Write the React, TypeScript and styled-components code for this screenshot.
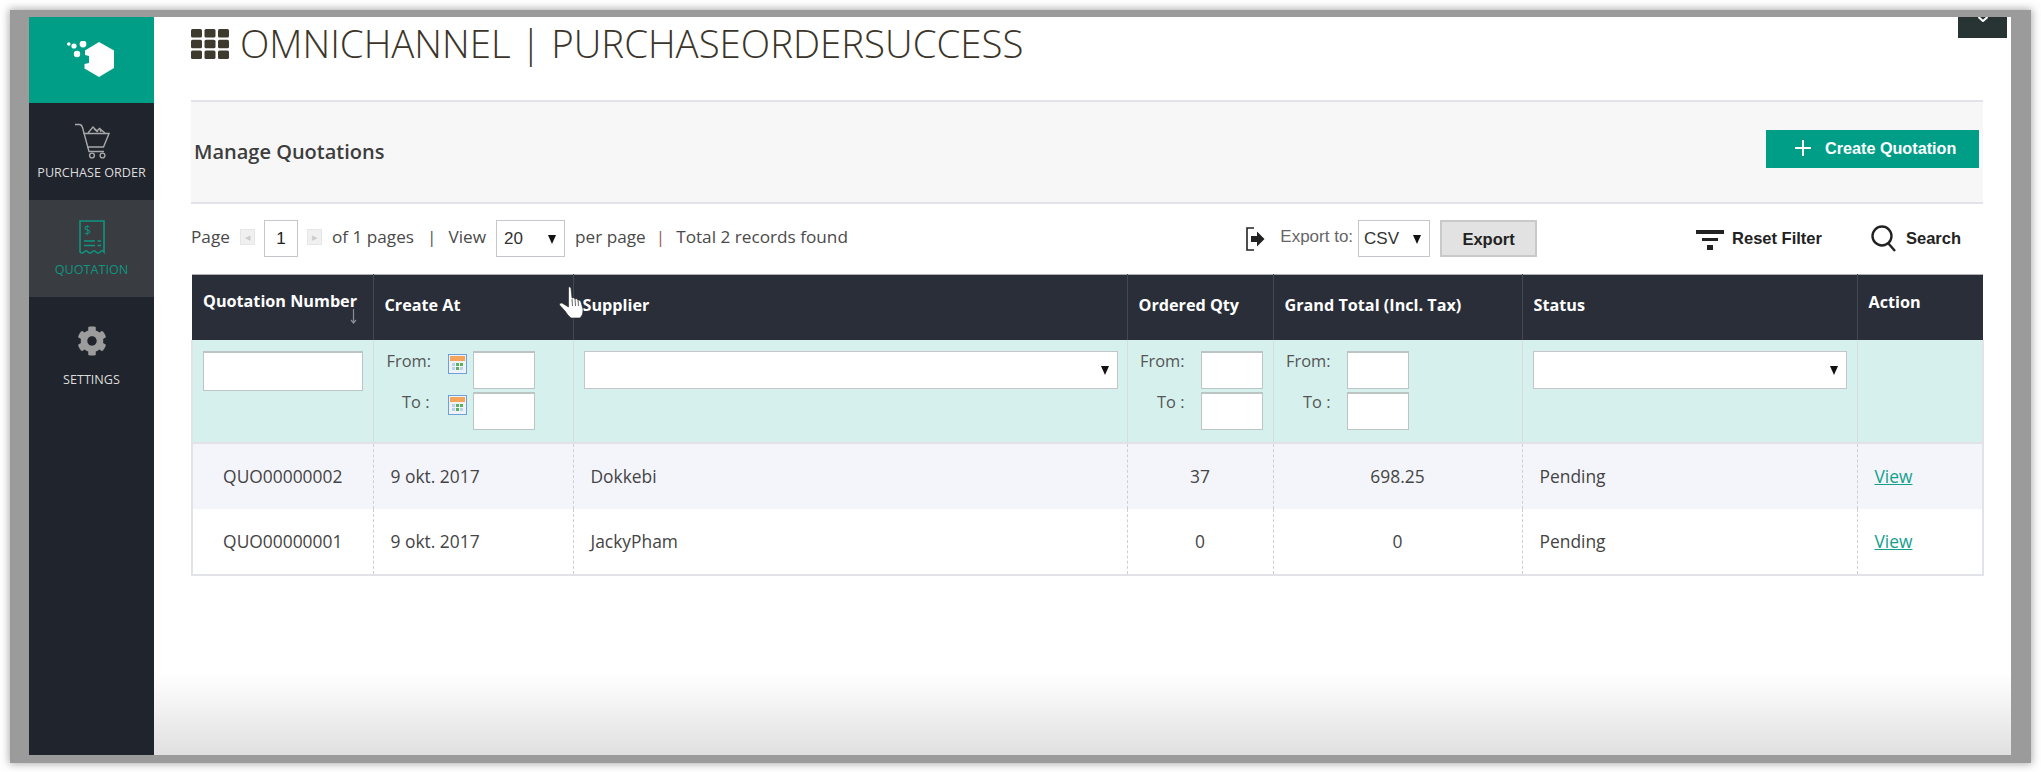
import React from 'react';
import styled, { createGlobalStyle } from 'styled-components';
import { FaCog } from 'react-icons/fa';

const GlobalStyle = createGlobalStyle`
  html, body { margin: 0; padding: 0; background: #fff; }
  body { font-family: "Open Sans", "Liberation Sans", sans-serif; color: #444; }
  * { box-sizing: border-box; }
`;

const TEAL = '#009e87';

const Page = styled.div`
  width: 2041px;
  height: 772px;
  padding: 10px 10px 9px 10px;
  overflow: hidden;
`;
const Frame = styled.div`
  position: relative;
  display: flex;
  height: 753px;
  border-style: solid;
  border-color: #9b9b9b;
  border-width: 7px 20px 8px 19px;
  box-shadow: 0 0 8px 1px rgba(90, 90, 90, 0.5);
  overflow: hidden;
`;
const Sidebar = styled.nav`
  flex: 0 0 125px;
  background: #20242c;
  display: flex;
  flex-direction: column;
`;
const Logo = styled.div`
  height: 86px;
  background: ${TEAL};
  display: flex;
  align-items: center;
  justify-content: center;
`;
const NavItem = styled.div<{ $active?: boolean }>`
  height: 97px;
  display: flex;
  flex-direction: column;
  align-items: center;
  padding-top: 20px;
  background: ${(p) => (p.$active ? '#393c40' : 'transparent')};
  color: ${(p) => (p.$active ? '#0f9580' : '#dcdcdc')};
  font-size: 12.6px;
  line-height: 18px;
  white-space: nowrap;
`;
const NavIconSlot = styled.div`
  height: 41px;
  display: flex;
  justify-content: center;
`;
const SettingsLabel = styled.span`
  margin-top: 13px;
`;
const Main = styled.main`
  flex: 1;
  min-width: 0;
  padding: 0 28px 0 37px;
  background: linear-gradient(to bottom, #fff 656px, #e0e0e0 100%);
`;
const TopTab = styled.div`
  position: absolute;
  top: 0;
  right: 4px;
  width: 49px;
  height: 21px;
  background: #283434;
  display: flex;
  justify-content: center;
`;
const Title = styled.h1`
  margin: 0;
  height: 83px;
  padding-top: 1px;
  display: flex;
  align-items: flex-start;
  gap: 11px;
  font-size: 38.4px;
  line-height: 50px;
  font-weight: 300;
  color: #3b3529;
  white-space: nowrap;
  svg { margin-top: 11px; }
`;
const Band = styled.div`
  height: 104px;
  border-top: 2px solid #e2e3e8;
  border-bottom: 2px solid #e2e3e8;
  background: #f7f7f7;
  display: flex;
  align-items: center;
  justify-content: space-between;
  padding: 0 4px 0 3px;
`;
const BandTitle = styled.div`
  font-size: 20px;
  font-weight: 600;
  color: #3d3d3d;
  margin-top: -1px;
`;
const CreateButton = styled.button`
  width: 213px;
  height: 38px;
  margin-top: -6px;
  border: 0;
  background: ${TEAL};
  color: #fff;
  font-family: "Liberation Sans", Arial, sans-serif;
  font-weight: 700;
  font-size: 16.2px;
  display: flex;
  align-items: center;
  padding: 0 0 2px 29px;
  gap: 14px;
  white-space: nowrap;
`;
const Toolbar = styled.div`
  height: 70px;
  padding-top: 16px;
  display: flex;
  align-items: flex-start;
  font-size: 17.2px;
  color: #4a4a4a;
  white-space: nowrap;
`;
const ToolText = styled.span<{ $gap?: number }>`
  margin-left: ${(p) => p.$gap ?? 0}px;
  line-height: 33px;
`;
const Sep = styled.span<{ $gap: number; $red?: boolean }>`
  margin-left: ${(p) => p.$gap}px;
  line-height: 33px;
  color: ${(p) => (p.$red ? '#9a5a50' : '#555')};
`;
const PagerButton = styled.span<{ $gap: number }>`
  margin: 9px 0 0 ${(p) => p.$gap}px;
  width: 15px;
  height: 16px;
  background: #f0f0f0;
  border: 1px solid #e6e6e6;
  display: flex;
  align-items: center;
  justify-content: center;
  color: #ccc;
  font-size: 7px;
`;
const PageInput = styled.input<{ $gap: number }>`
  width: 34px;
  height: 37px;
  margin-left: ${(p) => p.$gap}px;
  border: 1px solid #c4c6cc;
  background: #fff;
  text-align: center;
  font-family: "Liberation Sans", Arial, sans-serif;
  font-size: 17px;
  color: #222;
  padding: 0;
`;
const SelectWrap = styled.span<{ $w: number; $h?: number; $gap?: number }>`
  position: relative;
  display: block;
  width: ${(p) => p.$w}px;
  height: ${(p) => p.$h ?? 37}px;
  margin-left: ${(p) => p.$gap ?? 0}px;
`;
const Select = styled.select<{ $pad?: number }>`
  appearance: none;
  display: block;
  width: 100%;
  height: 100%;
  border: 1px solid #c4c6cc;
  border-radius: 0;
  background: #fff;
  font-family: "Liberation Sans", Arial, sans-serif;
  font-size: 17px;
  color: #333;
  padding: 0 0 0 ${(p) => p.$pad ?? 7}px;
`;
const Caret = styled.span`
  position: absolute;
  right: 9px;
  top: 50%;
  margin-top: -4px;
  border-left: 4px solid transparent;
  border-right: 4px solid transparent;
  border-top: 9px solid #111;
  pointer-events: none;
`;
const ExportIcon = styled.svg`
  margin: 7px 0 0 auto;
`;
const ExportLabel = styled.span`
  margin-left: 15px;
  margin-right: 5px;
  line-height: 33px;
  font-family: "Liberation Sans", Arial, sans-serif;
  font-size: 17px;
  color: #666;
`;
const ExportButton = styled.button`
  width: 97px;
  height: 37px;
  margin-left: 10px;
  border: 2px solid #c9c9c9;
  background: #e2e2e2;
  font-family: "Liberation Sans", Arial, sans-serif;
  font-weight: 700;
  font-size: 16.5px;
  color: #222;
  padding: 2px 0 0;
`;
const ToolAction = styled.span<{ $gap: number; $iconGap: number }>`
  margin-left: ${(p) => p.$gap}px;
  height: 33px;
  display: flex;
  align-items: center;
  gap: ${(p) => p.$iconGap}px;
  font-family: "Liberation Sans", Arial, sans-serif;
  font-weight: 700;
  font-size: 16.5px;
  color: #222;
  padding-top: 4px;
`;
const ToolEnd = styled.span`
  width: 22px;
`;
const Table = styled.table`
  width: 1791px;
  table-layout: fixed;
  border-collapse: collapse;
  border-top: 1px solid #b0b0b0;
`;
const Th = styled.th<{ $top?: number; $left?: number }>`
  height: 65px;
  background: #2a2e38;
  color: #fff;
  font-size: 16.2px;
  font-weight: 700;
  text-align: left;
  vertical-align: top;
  padding: ${(p) => p.$top ?? 19}px 0 0 ${(p) => p.$left ?? 11}px;
  line-height: 22px;
  border-right: 1px solid #444853;
  white-space: nowrap;
  position: relative;
  &:last-child { border-right: 0; }
`;
const SortArrow = styled.svg`
  position: absolute;
  left: 158px;
  top: 34px;
`;
const FilterCell = styled.td<{ $left?: number }>`
  height: 103px;
  background: #d6f1ed;
  vertical-align: top;
  padding: 11px 0 0 ${(p) => p.$left ?? 10}px;
  border-right: 1px solid #d5dedc;
  border-bottom: 2px solid #e2e3e8;
  &:first-child { border-left: 2px solid #e2e3e8; }
  &:last-child { border-right: 2px solid #e2e3e8; }
`;
const FilterInput = styled.input<{ $w: number; $h: number }>`
  display: block;
  width: ${(p) => p.$w}px;
  height: ${(p) => p.$h}px;
  border: 1px solid #bcc4c4;
  border-top-width: 2px;
  background: #fff;
  border-radius: 0;
  padding: 0;
`;
const FilterSelectWrap = styled.span<{ $w: number }>`
  position: relative;
  display: block;
  width: ${(p) => p.$w}px;
  height: 38px;
`;
const DateRange = styled.div<{ $icon?: boolean; $label: number }>`
  display: grid;
  grid-template-columns: ${(p) => (p.$icon ? `${p.$label}px 19px 62px` : `${p.$label}px 62px`)};
  column-gap: ${(p) => (p.$icon ? '6px' : '16px')};
  row-gap: 3px;
  align-items: start;
  font-size: 16.4px;
  color: #555;
  line-height: 20px;
`;
const DateLabel = styled.label<{ $wide?: boolean }>`
  text-align: right;
  white-space: nowrap;
  margin-right: ${(p) => (p.$wide ? '12px' : '0')};
`;
const Calendar = styled.svg`
  margin-top: 3px;
  display: block;
`;
const Td = styled.td<{ $center?: boolean; $even?: boolean }>`
  height: 66px;
  background: ${(p) => (p.$even ? '#fff' : '#f4f5fb')};
  font-size: 17.4px;
  color: #444;
  padding: 0 0 0 ${(p) => (p.$center ? 0 : 17)}px;
  text-align: ${(p) => (p.$center ? 'center' : 'left')};
  border-right: 1px dashed #cfcfcf;
  white-space: nowrap;
  &:first-child { border-left: 2px solid #e2e3e8; }
  &:last-child { border-right: 2px solid #e2e3e8; }
`;
const BodyRow = styled.tr`
  &:last-child td { border-bottom: 2px solid #e2e3e8; }
`;
const ViewLink = styled.a`
  color: #14a08c;
  text-decoration: underline;
`;
const Hand = styled.svg`
  position: absolute;
  left: 530px;
  top: 269px;
`;

const columns = [181, 200, 554, 146, 249, 335, 126];

const rows = [
  { no: 'QUO00000002', date: '9 okt. 2017', supplier: 'Dokkebi', qty: '37', total: '698.25' },
  { no: 'QUO00000001', date: '9 okt. 2017', supplier: 'JackyPham', qty: '0', total: '0' },
];

const CalendarIcon = () => (
  <Calendar width="19" height="20" viewBox="0 0 19 20">
    <rect x="0.5" y="0.5" width="18" height="19" fill="#eef3fa" stroke="#6f9fd8" />
    <rect x="2" y="2" width="15" height="5" fill="#f5a45c" />
    <rect x="4" y="9" width="3" height="3" fill="#bcd0ea" />
    <rect x="8" y="9" width="3" height="3" fill="#5cb25c" />
    <rect x="12" y="9" width="3" height="3" fill="#5cb25c" />
    <rect x="8" y="13" width="3" height="3" fill="#5cb25c" />
    <rect x="4" y="13" width="3" height="3" fill="#bcd0ea" />
    <rect x="12" y="13" width="3" height="3" fill="#bcd0ea" />
  </Calendar>
);

const GridIcon = () => (
  <svg width="38" height="30" viewBox="0 0 38 30" fill="#3f3a2e">
    {[0, 1, 2].map((r) =>
      [0, 1, 2].map((c) => <rect key={`${r}-${c}`} x={c * 13.5} y={r * 10.7} width="11" height="8.6" rx="1.6" />)
    )}
  </svg>
);

const App: React.FC = () => {
  return (
    <Page>
      <GlobalStyle />
      <Frame>
        <Sidebar>
          <Logo>
            <svg width="50" height="38" viewBox="0 0 50 38" fill="#fff">
              <path d="M32 1 L47 9.5 V27 L32 36 L17.5 27.5 V23 L22 22 V15 L18 14 V9.5 Z" />
              <circle cx="16" cy="3" r="3.4" />
              <circle cx="7" cy="5" r="2.6" />
              <circle cx="1.8" cy="3" r="1.8" />
              <circle cx="10" cy="13" r="3.2" />
            </svg>
          </Logo>
          <NavItem>
            <NavIconSlot>
              <svg width="36" height="36" viewBox="0 0 36 36" fill="none" stroke="#a8a8a8" strokeWidth="1.4">
                <path d="M1 1.5 H5.5 Q7.5 1.5 8.5 4.5 L15 28.5 H30" />
                <path d="M9.5 10.5 H35 L29.5 24 H13" />
                <path d="M14 10 L19 4 L23 8 L25.5 5.5 L31 10" />
                <path d="M20 6 L24 9 M26 6 L27 9" />
                <circle cx="18" cy="32.5" r="2.4" />
                <circle cx="28.5" cy="32.5" r="2.4" />
              </svg>
            </NavIconSlot>
            PURCHASE ORDER
          </NavItem>
          <NavItem $active>
            <NavIconSlot>
              <svg width="26" height="34" viewBox="0 0 26 34" fill="none" stroke="#0f9580" strokeWidth="1.6">
                <path d="M1 32 V1 H25 V32 Q23 29.5 21 32 Q19 34 17 32 Q15 29.5 13 32 Q11 34 9 32 Q7 29.5 5 32 Q3 34 1 32 Z" />
                <text x="5" y="15" fontSize="12" fontFamily="Open Sans" fill="#0f9580" stroke="none">
                  $
                </text>
                <path d="M5 21 H16 M5 25.5 H16 M18.5 21 H22 M18.5 25.5 H22" />
              </svg>
            </NavIconSlot>
            QUOTATION
          </NavItem>
          <NavItem>
            <NavIconSlot>
              <FaCog size={30} color="#9c9c9c" style={{ marginTop: 9 }} />
            </NavIconSlot>
            <SettingsLabel>SETTINGS</SettingsLabel>
          </NavItem>
        </Sidebar>
        <Main>
          <Title>
            <GridIcon />
            OMNICHANNEL | PURCHASEORDERSUCCESS
          </Title>
          <Band>
            <BandTitle>Manage Quotations</BandTitle>
            <CreateButton>
              <svg width="16" height="16" viewBox="0 0 16 16" fill="#fff">
                <rect x="7" y="0" width="2" height="16" />
                <rect x="0" y="7" width="16" height="2" />
              </svg>
              Create Quotation
            </CreateButton>
          </Band>
          <Toolbar>
            <ToolText>Page</ToolText>
            <PagerButton $gap={10}>◀</PagerButton>
            <PageInput $gap={9} defaultValue="1" />
            <PagerButton $gap={9}>▶</PagerButton>
            <ToolText $gap={10}>of 1 pages</ToolText>
            <Sep $gap={13}>|</Sep>
            <ToolText $gap={12}>View</ToolText>
            <SelectWrap $w={69} $gap={10}>
              <Select defaultValue="20">
                <option>20</option>
              </Select>
              <Caret />
            </SelectWrap>
            <ToolText $gap={10}>per page</ToolText>
            <Sep $red $gap={10}>
              |
            </Sep>
            <ToolText $gap={11}>Total 2 records found</ToolText>
            <ExportIcon width="19" height="24" viewBox="0 0 19 24" fill="none" stroke="#222" strokeWidth="1.6">
              <path d="M8 1 H1 V23 H8" />
              <path d="M5 9 H11 V4.5 L18.5 12 L11 19.5 V15 H5 Z" fill="#222" stroke="none" />
            </ExportIcon>
            <ExportLabel>Export to:</ExportLabel>
            <SelectWrap $w={72}>
              <Select $pad={5} defaultValue="CSV">
                <option>CSV</option>
              </Select>
              <Caret />
            </SelectWrap>
            <ExportButton>Export</ExportButton>
            <ToolAction $gap={159} $iconGap={8}>
              <svg width="28" height="24" viewBox="0 0 28 24" fill="#222">
                <rect x="0" y="3" width="28" height="4" />
                <rect x="6" y="11" width="16" height="3" />
                <rect x="11" y="18" width="6" height="5" />
              </svg>
              Reset Filter
            </ToolAction>
            <ToolAction $gap={49} $iconGap={10}>
              <svg width="25" height="27" viewBox="0 0 25 27" fill="none" stroke="#222" strokeWidth="2.4">
                <circle cx="11" cy="11" r="9.5" />
                <path d="M17 18 L24 26" />
              </svg>
              Search
            </ToolAction>
            <ToolEnd />
          </Toolbar>
          <Table>
            <colgroup>
              {columns.map((w, i) => (
                <col key={i} style={{ width: w }} />
              ))}
            </colgroup>
            <thead>
              <tr>
                <Th $top={15}>
                  Quotation Number
                  <SortArrow width="7" height="15" viewBox="0 0 7 15" stroke="#8a8d94" fill="none" strokeWidth="1.2">
                    <path d="M3.5 0 V14 M1 11 L3.5 14 L6 11" />
                  </SortArrow>
                </Th>
                <Th>Create At</Th>
                <Th $left={9}>Supplier</Th>
                <Th>Ordered Qty</Th>
                <Th>Grand Total (Incl. Tax)</Th>
                <Th>Status</Th>
                <Th $top={16}>Action</Th>
              </tr>
              <tr>
                <FilterCell $left={10}>
                  <FilterInput $w={160} $h={40} />
                </FilterCell>
                <FilterCell $left={13}>
                  <DateRange $icon $label={55}>
                    <DateLabel $wide>From:</DateLabel>
                    <CalendarIcon />
                    <FilterInput $w={62} $h={38} />
                    <DateLabel $wide>To :</DateLabel>
                    <CalendarIcon />
                    <FilterInput $w={62} $h={38} />
                  </DateRange>
                </FilterCell>
                <FilterCell>
                  <FilterSelectWrap $w={534}>
                    <Select />
                    <Caret />
                  </FilterSelectWrap>
                </FilterCell>
                <FilterCell $left={12}>
                  <DateRange $label={45}>
                    <DateLabel>From:</DateLabel>
                    <FilterInput $w={62} $h={38} />
                    <DateLabel>To :</DateLabel>
                    <FilterInput $w={62} $h={38} />
                  </DateRange>
                </FilterCell>
                <FilterCell $left={12}>
                  <DateRange $label={45}>
                    <DateLabel>From:</DateLabel>
                    <FilterInput $w={62} $h={38} />
                    <DateLabel>To :</DateLabel>
                    <FilterInput $w={62} $h={38} />
                  </DateRange>
                </FilterCell>
                <FilterCell>
                  <FilterSelectWrap $w={314}>
                    <Select />
                    <Caret />
                  </FilterSelectWrap>
                </FilterCell>
                <FilterCell />
              </tr>
            </thead>
            <tbody>
              {rows.map((row, i) => (
                <BodyRow key={row.no}>
                  <Td $center $even={i === 1}>
                    {row.no}
                  </Td>
                  <Td $even={i === 1}>{row.date}</Td>
                  <Td $even={i === 1}>{row.supplier}</Td>
                  <Td $center $even={i === 1}>
                    {row.qty}
                  </Td>
                  <Td $center $even={i === 1}>
                    {row.total}
                  </Td>
                  <Td $even={i === 1}>Pending</Td>
                  <Td $even={i === 1}>
                    <ViewLink href="#">View</ViewLink>
                  </Td>
                </BodyRow>
              ))}
            </tbody>
          </Table>
          <Hand width="25" height="33" viewBox="0 0 25 33">
            <path
              d="M9.5 1.5 Q11 0 12 2 L13 12 Q15 11 16 13 Q18 12 19 14 Q21.5 13.5 22 16 L24 23 Q24.5 29 21 32 H12 Q9 30 6 25 L0.5 19 Q0 16.5 3 17 L9.5 21 Z"
              fill="#fff"
              stroke="#222"
              strokeWidth="0.6"
            />
            <path d="M13 13 L13.5 20 M16 13 L16.5 20 M19 14 L19.5 20" stroke="#555" strokeWidth="0.9" fill="none" />
          </Hand>
          <TopTab>
            <svg width="10" height="5" viewBox="0 0 10 5" fill="none" stroke="#fff" strokeWidth="2">
              <path d="M0.5 0 L5 4 L9.5 0" />
            </svg>
          </TopTab>
        </Main>
      </Frame>
    </Page>
  );
};

export default App;
